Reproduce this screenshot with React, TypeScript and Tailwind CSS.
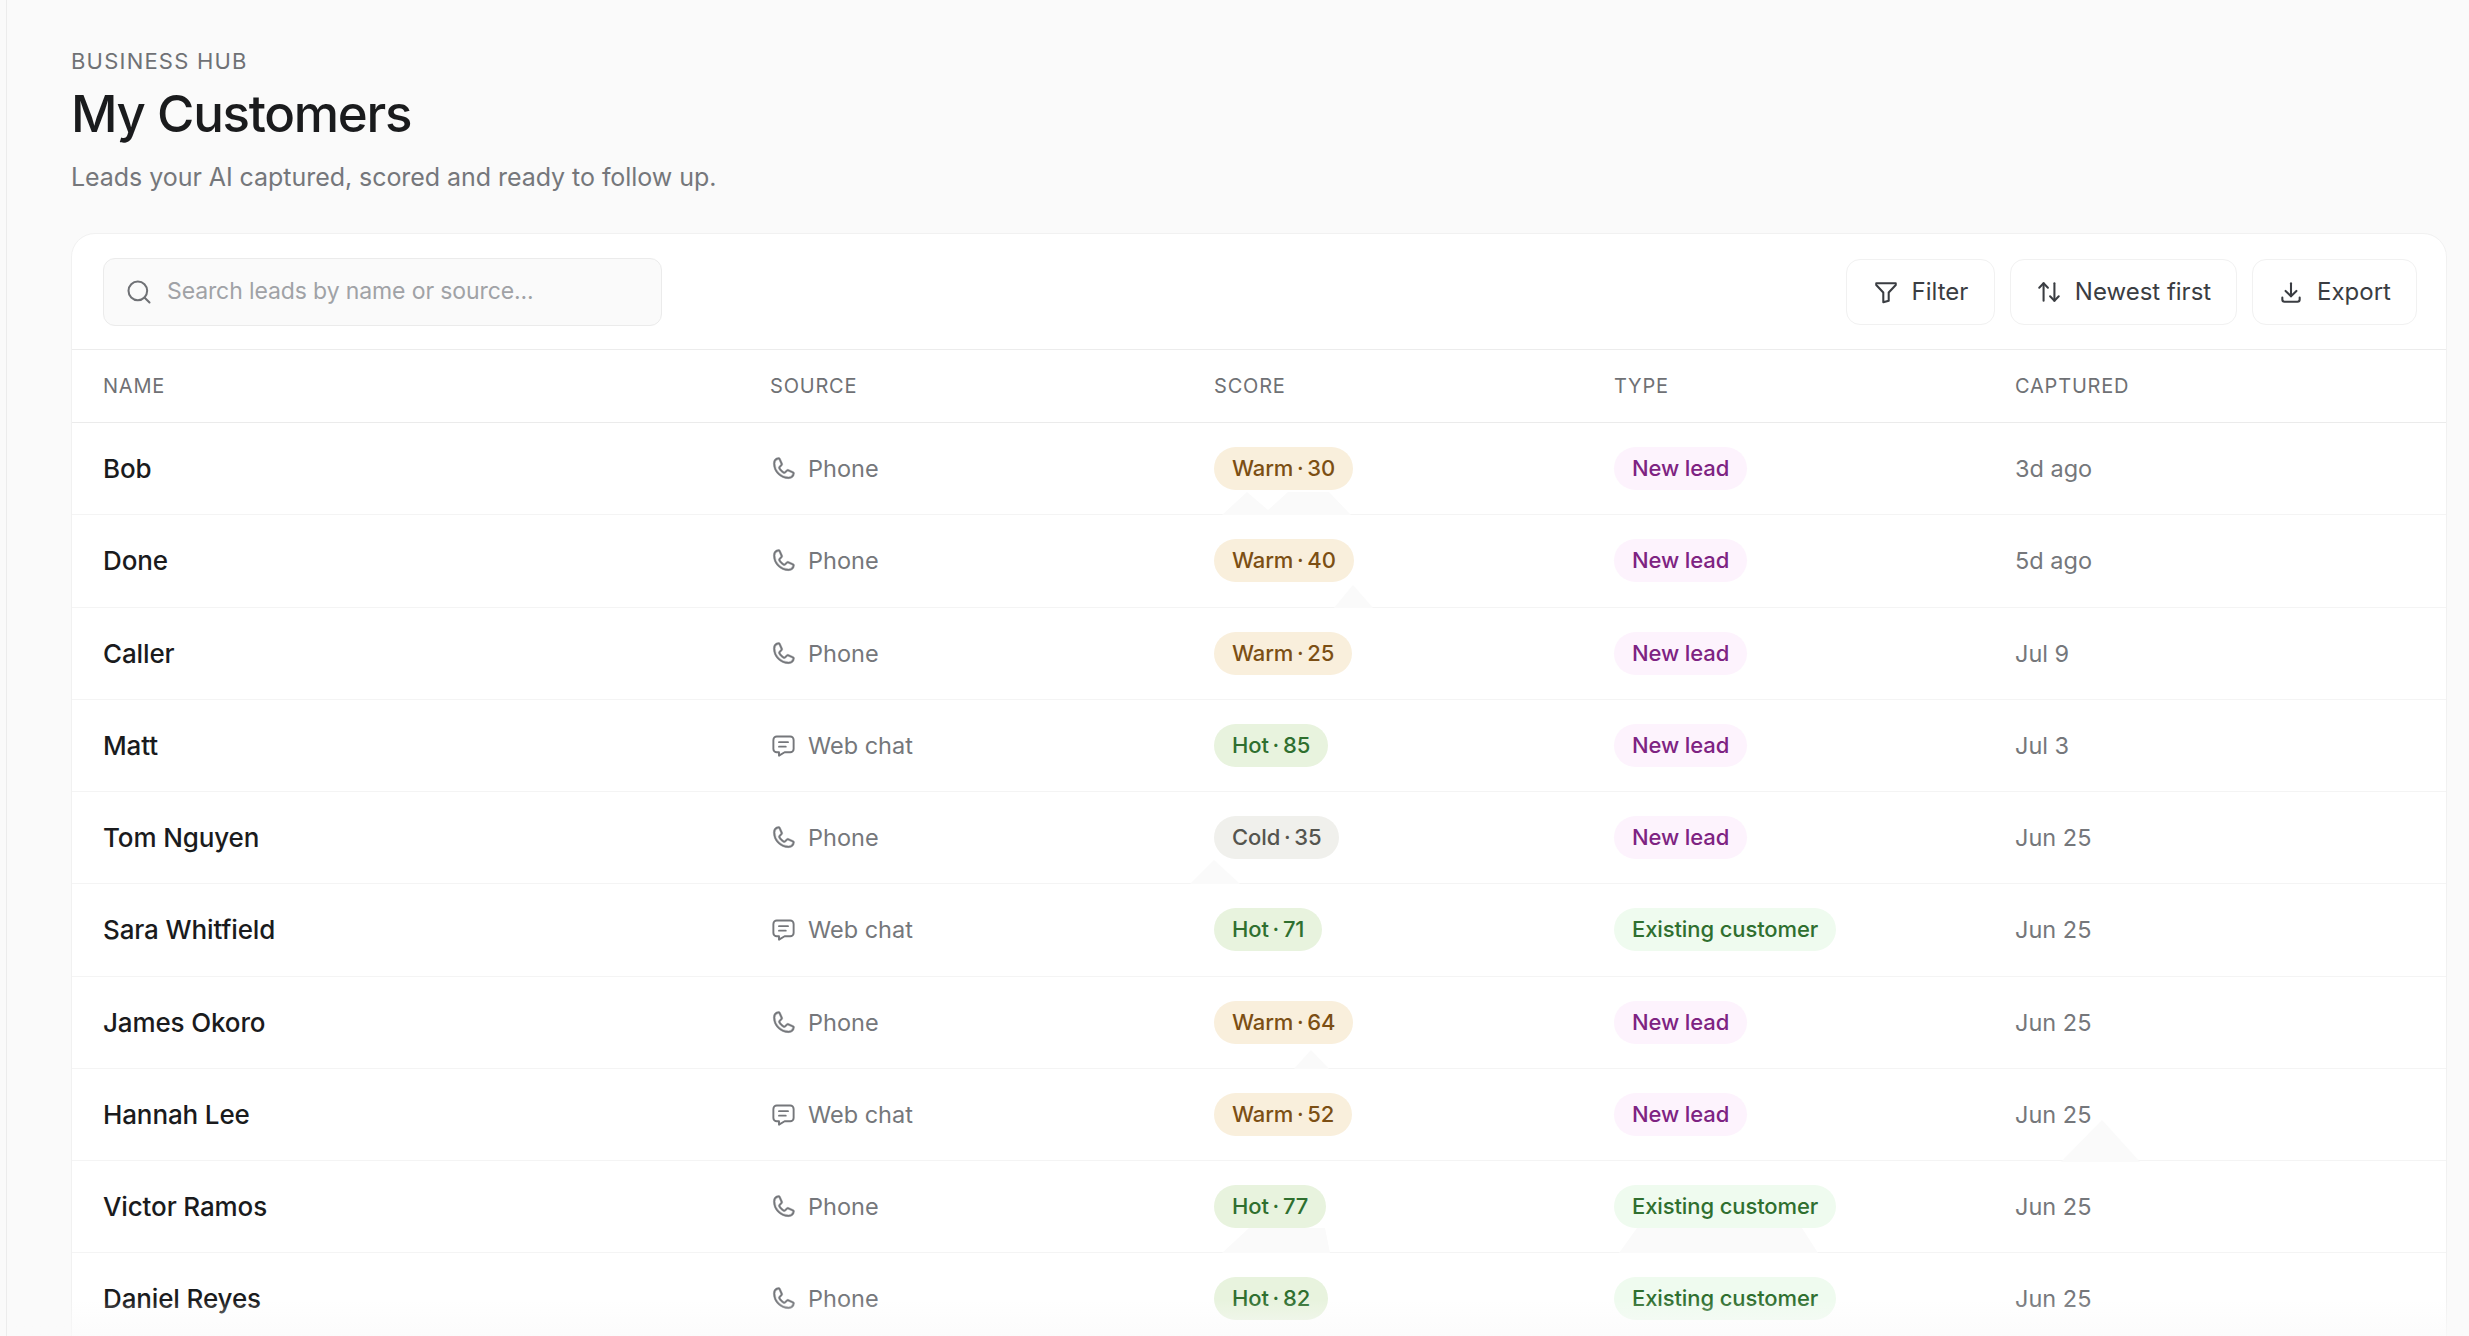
import { ArrowUpDown, Search } from "lucide-react";
import { PiPhone } from "react-icons/pi";
import { TbDownload, TbMessage } from "react-icons/tb";

const leads = [
  { name: "Bob", source: "Phone", score: "Warm · 30", type: "New lead", captured: "3d ago" },
  { name: "Done", source: "Phone", score: "Warm · 40", type: "New lead", captured: "5d ago" },
  { name: "Caller", source: "Phone", score: "Warm · 25", type: "New lead", captured: "Jul 9" },
  { name: "Matt", source: "Web chat", score: "Hot · 85", type: "New lead", captured: "Jul 3" },
  { name: "Tom Nguyen", source: "Phone", score: "Cold · 35", type: "New lead", captured: "Jun 25" },
  { name: "Sara Whitfield", source: "Web chat", score: "Hot · 71", type: "Existing customer", captured: "Jun 25" },
  { name: "James Okoro", source: "Phone", score: "Warm · 64", type: "New lead", captured: "Jun 25" },
  { name: "Hannah Lee", source: "Web chat", score: "Warm · 52", type: "New lead", captured: "Jun 25" },
  { name: "Victor Ramos", source: "Phone", score: "Hot · 77", type: "Existing customer", captured: "Jun 25" },
  { name: "Daniel Reyes", source: "Phone", score: "Hot · 82", type: "Existing customer", captured: "Jun 25" },
];

const scoreStyles: Record<string, string> = {
  Warm: "bg-[#f9efdc] text-[#7c4f14]",
  Hot: "bg-[#e8f3de] text-[#2f6f2f]",
  Cold: "bg-[#f0f0ec] text-[#55554f]",
};

const typeStyles: Record<string, string> = {
  "New lead": "bg-[#fdf3fd] text-[#7e2382]",
  "Existing customer": "bg-[#effbef] text-[#2f6f2f]",
};

const columns = "grid grid-cols-[667px_444px_400px_401px_1fr]";

const ghosts = [
  "1222,515 1247,492 1268,510 1288,492 1329,492 1351,515",
  "1334,608 1353,585 1373,608",
  "1190,884 1214,860 1240,884",
  "1294,1069 1311,1050 1329,1069",
  "2061,1162 2102,1120 2140,1162",
  "1222,1253 1249,1228 1325,1228 1330,1253",
  "1619,1253 1637,1228 1802,1228 1818,1253",
];

function FilterIcon() {
  return (
    <svg viewBox="0 0 24 24" fill="none" stroke="currentColor" strokeWidth="1.9" strokeLinejoin="round" strokeLinecap="round" className="h-[26px] w-[26px]">
      <path d="M3 4h18v1.5l-6.5 7V20l-5 1.5v-9L3 5.5z" />
    </svg>
  );
}

function ToolButton({ icon, label, width }: { icon: React.ReactNode; label: string; width: string }) {
  return (
    <button className={`flex h-[66px] items-center justify-center gap-[13px] rounded-[14px] border border-[#f1f1f1] bg-white text-[24px] text-[#3a3d42] ${width}`}>
      {icon}
      {label}
    </button>
  );
}

export default function App() {
  return (
    <div className="relative h-[1336px] overflow-hidden bg-[#fafafa] font-['Inter',sans-serif]">
      <main className="relative ml-[6px] h-full overflow-hidden border-l border-[#ececec] pl-[64px] pr-[22px] pt-[47px]">
        <p className="text-[22px] leading-[28px] tracking-[0.055em] text-[#6f7175]">BUSINESS HUB</p>
        <h1 className="mt-[7px] text-[51px] font-medium leading-[64px] tracking-[-0.025em] text-[#1a1b1d]">My Customers</h1>
        <p className="mt-[13px] text-[25px] leading-[36px] text-[#75777b] tracking-[-0.002em]">Leads your AI captured, scored and ready to follow up.</p>

        <section className="mt-[38px] rounded-t-[24px] border border-[#f1f1f1] bg-white">
          <div className="flex h-[116px] items-center justify-between border-b border-[#ececec] pl-[31px] pr-[29px]">
            <div className="flex h-[68px] w-[559px] items-center gap-[14px] rounded-[12px] border border-[#ebebeb] bg-[#fafafa] pl-[21px]">
              <Search className="h-[28px] w-[28px] text-[#6f7175]" strokeWidth={1.75} />
              <span className="text-[23px] tracking-[-0.005em] text-[#a0a2a6]">Search leads by name or source...</span>
            </div>
            <div className="flex items-center gap-[15px]">
              <ToolButton width="w-[149px]" icon={<FilterIcon />} label="Filter" />
              <ToolButton width="w-[227px]" icon={<ArrowUpDown className="h-[26px] w-[26px]" strokeWidth={1.9} />} label="Newest first" />
              <ToolButton width="w-[165px]" icon={<TbDownload className="h-[26px] w-[26px]" strokeWidth={1.9} />} label="Export" />
            </div>
          </div>

          <div className={`${columns} h-[73px] items-center border-b border-[#ebebeb] pl-[31px] text-[20px] tracking-[0.04em] text-[#6f7175]`}>
            <span>NAME</span>
            <span>SOURCE</span>
            <span>SCORE</span>
            <span>TYPE</span>
            <span>CAPTURED</span>
          </div>

          {leads.map((lead) => (
            <div key={lead.name} className={`${columns} h-[92.25px] items-center border-b border-[#f4f4f4] pl-[31px]`}>
              <span className="text-[26px] font-[450] tracking-[-0.005em] text-[#1a1b1d]">{lead.name}</span>
              <span className="flex items-center gap-[11px] text-[23.5px] text-[#75777b]">
                {lead.source === "Phone" ? (
                  <PiPhone className="h-[27px] w-[27px] stroke-[4]" stroke="currentColor" />
                ) : (
                  <TbMessage className="h-[27px] w-[27px]" strokeWidth={1.7} />
                )}
                {lead.source}
              </span>
              <span>
                <span className={`inline-flex h-[43px] items-center rounded-full px-[18px] text-[22px] font-[460] tracking-[-0.005em] [word-spacing:-2px] ${scoreStyles[lead.score.split(" ")[0]]}`}>
                  {lead.score}
                </span>
              </span>
              <span>
                <span className={`inline-flex h-[43px] items-center rounded-full px-[18px] text-[22px] font-[460] tracking-[-0.005em] ${typeStyles[lead.type]}`}>
                  {lead.type}
                </span>
              </span>
              <span className="text-[23.5px] text-[#75777b]">{lead.captured}</span>
            </div>
          ))}
        </section>

        <div className="absolute bottom-0 left-0 right-0 h-[36px] bg-gradient-to-b from-transparent to-[#fafafa]/70" />
      </main>
      <svg className="pointer-events-none absolute left-0 top-0 h-[1336px] w-[2469px]" viewBox="0 0 2469 1336">
        {ghosts.map((points) => (
          <polygon key={points} points={points} fill="#fafafa" />
        ))}
      </svg>
    </div>
  );
}
